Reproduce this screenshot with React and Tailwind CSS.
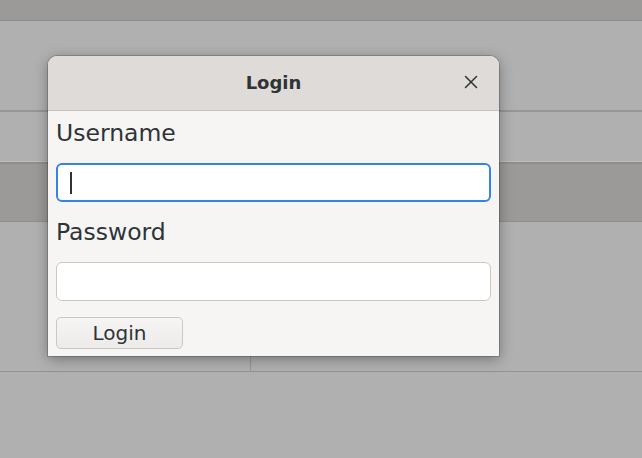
import React from "react";

const font = { fontFamily: '"DejaVu Sans", "Liberation Sans", sans-serif' };

function Backdrop() {
    return (
        <div className="flex flex-col w-[642px] h-[458px] bg-[#b0b0b0]">
            <div className="h-[21px] bg-[#9b9a98] border-b border-[#8e8d8b]" />
            <div className="h-[91px] border-b-2 border-[#979695]" />
            <div className="h-[50px] border-b border-[#bcbcbc]" />
            <div className="h-[60px] bg-[#9b9a98] border-t-2 border-[#8f8e8c] border-b border-[#8c8b8a]" />
            <div className="h-[150px] flex border-b border-[#959494]">
                <div className="w-[251px] border-r border-[#979695]" />
                <div className="flex-1" />
            </div>
            <div className="flex-1" />
        </div>
    );
}

function LoginDialog() {
    return (
        <div className="absolute left-[48px] top-[56px] w-[451px] rounded-t-[9px] bg-[#f6f5f4] shadow-[0_3px_14px_rgba(0,0,0,0.35),0_0_0_1px_rgba(0,0,0,0.18)] overflow-hidden text-[#2e3436]" style={font}>
            <div className="relative h-[55px] flex items-center justify-center bg-[#dedbd8] border-b border-[#c9c4bf]">
                <span className="font-bold text-[18px] leading-none">Login</span>
                <button className="absolute right-[20px] top-[18px] w-[16px] h-[16px] flex items-center justify-center">
                    <svg width="14" height="14" viewBox="0 0 14 14">
                        <path d="M1.5 1.5 L12.5 12.5 M12.5 1.5 L1.5 12.5" stroke="#2e3436" strokeWidth="1.5" strokeLinecap="round" />
                    </svg>
                </button>
            </div>
            <div className="flex flex-col px-[8px] pb-[7px]">
                <label className="text-[23.5px] leading-[44px] h-[44px]">Username</label>
                <div className="mt-[8px] h-[39px] rounded-[6px] border-2 border-[#3584e4] bg-white flex items-center px-[12px]">
                    <span className="w-[1.5px] h-[22px] bg-[#2e3436]" />
                </div>
                <label className="mt-[12px] text-[23.5px] leading-[36px] h-[36px]">Password</label>
                <div className="mt-[12px] h-[39px] rounded-[6px] border border-[#cdc7c2] bg-white" />
                <button className="mt-[16px] w-[127px] h-[32px] rounded-[5px] border border-[#cdc7c2] bg-gradient-to-b from-[#f6f5f4] to-[#edebe9] text-[20px] leading-none flex items-center justify-center">
                    Login
                </button>
            </div>
        </div>
    );
}

export default function App() {
    return (
        <div className="relative w-[642px] h-[458px] overflow-hidden">
            <Backdrop />
            <LoginDialog />
        </div>
    );
}
